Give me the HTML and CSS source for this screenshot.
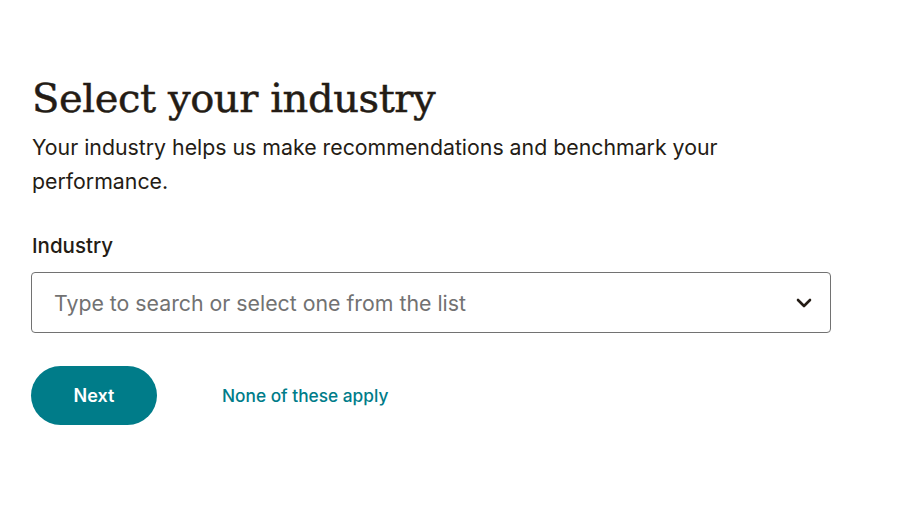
FILE: index.html
```html
<!DOCTYPE html>
<html lang="en">
<head>
    <meta charset="UTF-8">
    <meta name="viewport" content="width=device-width, initial-scale=1.0">
    <title>Select your industry</title>
    <link rel="stylesheet" href="styles.css">
</head>
<body>

    <div class="step">
        <h1>Select your industry</h1>
        <p class="intro">Your industry helps us make recommendations and benchmark your performance.</p>

        <label class="field-label" for="industryInput">Industry</label>
        <div class="combo">
            <input type="text" id="industryInput" placeholder="Type to search or select one from the list">
            <svg class="chevron" width="16" height="10" viewBox="0 0 16 10">
                <path d="M2 2 L8 8 L14 2" fill="none" stroke="#241c15" stroke-width="2.6" stroke-linecap="round" stroke-linejoin="round"/>
            </svg>
        </div>

        <div class="actions">
            <button class="button">Next</button>
            <a class="skip" href="#">None of these apply</a>
        </div>
    </div>

</body>
</html>
```

FILE: styles.css
```css
body {
    margin: 0;
    background: #fff;
    color: #241c15;
    font-family: "Inter", "Liberation Sans", sans-serif;
}

.step {
    padding: 70px 0 0 32px;
    width: 800px;
}

h1 {
    font-family: "DejaVu Serif", "Liberation Serif", serif;
    font-weight: normal;
    font-size: 40px;
    margin: 0;
    line-height: 56px;
    letter-spacing: -0.4px;
    -webkit-text-stroke: 0.5px #241c15;
}

.intro {
    font-size: 21.3px;
    line-height: 34px;
    margin: 4px 0 0;
    max-width: 720px;
}

.field-label {
    display: block;
    font-size: 20.5px;
    font-weight: 500;
    margin-top: 35px;
    line-height: 26px;
}

.combo {
    position: relative;
    margin-top: 13px;
}

.combo input {
    box-sizing: border-box;
    width: 800px;
    height: 61px;
    margin-left: -1px;
    padding: 0 60px 0 22px;
    border: 1px solid #727272;
    border-radius: 4px;
    font-family: inherit;
    font-size: 21.3px;
    color: #241c15;
}

.combo input::placeholder {
    color: #727272;
}

.chevron {
    position: absolute;
    right: 20px;
    top: 26px;
}

.actions {
    display: flex;
    align-items: center;
    gap: 65px;
    margin-top: 33px;
}

.button {
    margin-left: -1px;
    width: 126px;
    height: 59px;
    border: none;
    border-radius: 30px;
    background: #007c89;
    color: #fff;
    font-family: inherit;
    font-size: 18px;
    font-weight: 600;
    cursor: pointer;
}

.skip {
    color: #007c89;
    font-size: 17.3px;
    font-weight: 500;
    text-decoration: none;
}
```
